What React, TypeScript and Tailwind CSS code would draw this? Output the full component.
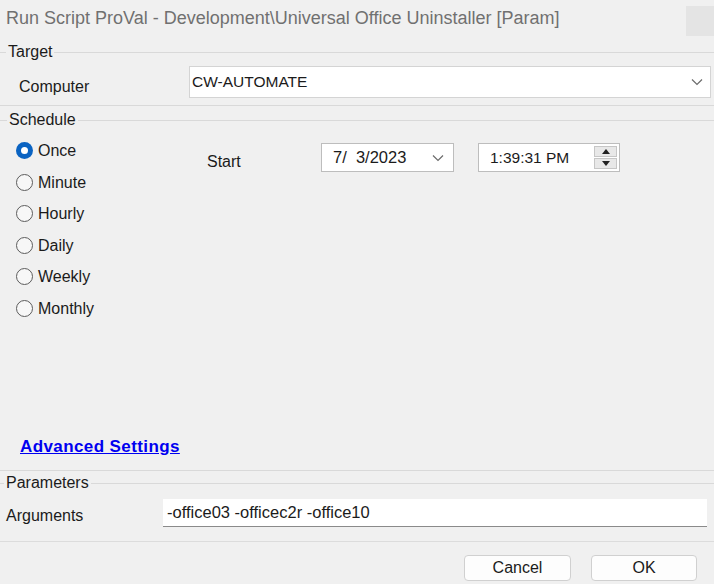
import React from 'react';

const radios = ['Once', 'Minute', 'Hourly', 'Daily', 'Weekly', 'Monthly'];

function GroupHeader({ label, lead }: { label: string; lead: string }) {
    return (
        <div className='h-[18px] flex items-center'>
            <div className={`${lead} h-px bg-[#d9d9d9]`} />
            <span className='px-[2px] leading-none'>{label}</span>
            <div className='flex-1 h-px bg-[#d9d9d9]' />
        </div>
    );
}

function Chevron() {
    return (
        <svg width="12" height="8" viewBox="0 0 12 8">
            <polyline points="1,1.5 6,6.5 11,1.5" fill="none" stroke="#6b6b6b" strokeWidth="1.2" />
        </svg>
    );
}

export default function App() {
    return (
        <div className="w-[714px] h-[584px] bg-[#f0f0f0] font-['Liberation_Sans',Arial,sans-serif] text-[16px] text-[#1b1b1b] overflow-hidden flex flex-col">

            {/* Title bar */}
            <div className='h-[36px] flex justify-between'>
                <p className='pl-[6px] pt-[5px] text-[18px] text-[#707070] whitespace-nowrap'>
                    Run Script ProVal - Development\Universal Office Uninstaller [Param]
                </p>
                <div className='mt-[6px] w-[28px] h-[30px] bg-[#e4e4e4] shrink-0' />
            </div>

            {/* Target */}
            <div className='mt-[7px]'>
                <GroupHeader label='Target' lead='w-[6px]' />
            </div>
            <div className='mt-[5px] h-[32px] flex items-center'>
                <p className='w-[189px] pl-[19px] pt-[9px]'>Computer</p>
                <div className='w-[522px] h-[32px] bg-white border border-[#d4d4d4] flex items-center justify-between pl-[2px] pr-[7px] text-[15.5px]'>
                    <span>CW-AUTOMATE</span>
                    <Chevron />
                </div>
            </div>
            <div className='mt-[7px] h-px bg-[#d9d9d9]' />

            {/* Schedule */}
            <div className='mt-[5px]'>
                <GroupHeader label='Schedule' lead='w-[7px]' />
            </div>
            <div className='h-[341px] flex flex-col'>
                <div className='flex'>
                    <div className='mt-[6px] w-[190px] pl-[16px] flex flex-col'>
                        {radios.map((r, i) => (
                            <div key={r} className='h-[31.5px] flex items-center gap-[5px]'>
                                {i === 0 ? (
                                    <div className='w-[17px] h-[17px] rounded-full bg-[#0a63c2] flex items-center justify-center'>
                                        <div className='w-[7px] h-[7px] rounded-full bg-white' />
                                    </div>
                                ) : (
                                    <div className='w-[17px] h-[17px] rounded-full border border-[#5c5c5c] bg-[#f7f7f7]' />
                                )}
                                <span className='pt-px'>{r}</span>
                            </div>
                        ))}
                    </div>
                    <div className='mt-[14px] flex items-start'>
                        <p className='w-[131px] pl-[17px] pt-[7px]'>Start</p>
                        <div className='w-[133px] h-[29px] bg-white border border-[#bdbdbd] flex items-center justify-between pl-[11px] pr-[9px] text-[16.5px]'>
                            <span className='whitespace-pre'>7/  3/2023</span>
                            <Chevron />
                        </div>
                        <div className='ml-[24px] w-[142px] h-[29px] bg-white border border-[#bdbdbd] flex items-center justify-between pl-[11px] pr-[2px] text-[15.5px]'>
                            <span>1:39:31 PM</span>
                            <div className='flex flex-col gap-px'>
                                <div className='w-[23px] h-[11px] bg-[#e8e8e8] border border-[#c6c6c6] flex items-center justify-center'>
                                    <svg width="8" height="5" viewBox="0 0 8 5"><polygon points="0,5 4,0 8,5" fill="#222" /></svg>
                                </div>
                                <div className='w-[23px] h-[11px] bg-[#e8e8e8] border border-[#c6c6c6] flex items-center justify-center'>
                                    <svg width="8" height="5" viewBox="0 0 8 5"><polygon points="0,0 8,0 4,5" fill="#222" /></svg>
                                </div>
                            </div>
                        </div>
                    </div>
                </div>
                <a href="#" className='mt-auto mb-[13px] ml-[20px] h-[20px] leading-[20px] font-bold text-[17px] text-[#0000f0] underline tracking-[0.4px] self-start'>
                    Advanced Settings
                </a>
            </div>
            <div className='h-px bg-[#d9d9d9]' />

            {/* Parameters */}
            <div className='mt-[3px]'>
                <GroupHeader label='Parameters' lead='w-[4px]' />
            </div>
            <div className='mt-[7px] h-[28px] flex items-center'>
                <p className='w-[163px] pl-[6px] pt-[6px]'>Arguments</p>
                <div className='w-[544px] h-[28px] bg-white border-b border-[#8a8a8a] flex items-center pl-[4px] text-[16.5px]'>
                    -office03 -officec2r -office10
                </div>
            </div>
            <div className='mt-[14px] h-px bg-[#dcdcdc]' />

            {/* Buttons */}
            <div className='mt-[13px] flex justify-end gap-[20px] pr-[17px]'>
                <button className='w-[107px] h-[26px] bg-[#fdfdfd] border border-[#d0d0d0] rounded-[4px]'>Cancel</button>
                <button className='w-[106px] h-[26px] bg-[#fdfdfd] border border-[#d0d0d0] rounded-[4px]'>OK</button>
            </div>
        </div>
    );
}
